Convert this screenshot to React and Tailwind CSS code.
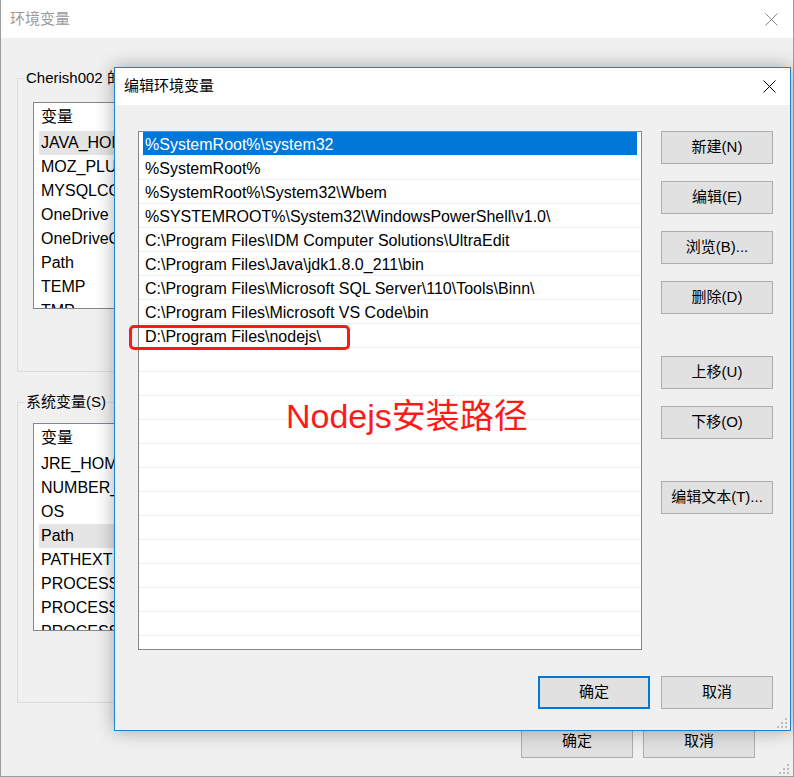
const userVars = ['JAVA_HOME', 'MOZ_PLUGIN_PATH', 'MYSQLCONNECTOR', 'OneDrive', 'OneDriveConsumer', 'Path', 'TEMP', 'TMP'];
const sysVars = ['JRE_HOME', 'NUMBER_OF_PROCESSORS', 'OS', 'Path', 'PATHEXT', 'PROCESSOR_ARCHITECTURE', 'PROCESSOR_IDENTIFIER', 'PROCESSOR_LEVEL'];

const paths = [
  '%SystemRoot%\\system32',
  '%SystemRoot%',
  '%SystemRoot%\\System32\\Wbem',
  '%SYSTEMROOT%\\System32\\WindowsPowerShell\\v1.0\\',
  'C:\\Program Files\\IDM Computer Solutions\\UltraEdit',
  'C:\\Program Files\\Java\\jdk1.8.0_211\\bin',
  'C:\\Program Files\\Microsoft SQL Server\\110\\Tools\\Binn\\',
  'C:\\Program Files\\Microsoft VS Code\\bin',
  'D:\\Program Files\\nodejs\\',
];

function CloseX({ className }) {
  return (
    <svg width="13" height="13" viewBox="0 0 13 13" className={className}>
      <path d="M0.5 0.5L12.5 12.5M12.5 0.5L0.5 12.5" stroke="currentColor" strokeWidth="1" />
    </svg>
  );
}

function Grip({ className }) {
  return (
    <svg width="12" height="12" viewBox="0 0 12 12" className={className}>
      <g fill="#bdbdbd">
        <rect x="9" y="1" width="2" height="2" />
        <rect x="5" y="5" width="2" height="2" />
        <rect x="9" y="5" width="2" height="2" />
        <rect x="1" y="9" width="2" height="2" />
        <rect x="5" y="9" width="2" height="2" />
        <rect x="9" y="9" width="2" height="2" />
      </g>
    </svg>
  );
}

function Button({ children, focused, className = '' }) {
  return (
    <div
      className={`h-[33px] flex items-center justify-center bg-[#e1e1e1] text-[15px] ${
        focused ? 'border-2 border-[#0078d7]' : 'border border-[#adadad]'
      } ${className}`}
    >
      {children}
    </div>
  );
}

function VarList({ items, active, height }) {
  return (
    <div className={`ml-[15px] mr-[15px] bg-white border border-[#828790] overflow-hidden px-[5px] ${height}`}>
      <div className="h-[28px] flex items-center pl-[2px] text-[16px]">变量</div>
      {items.map((name) => (
        <div
          key={name}
          className={`h-[24px] flex items-center pl-[2px] text-[16px] whitespace-nowrap ${
            name === active ? 'bg-[#e5e5e5]' : ''
          }`}
        >
          {name}
        </div>
      ))}
    </div>
  );
}

export default function App() {
  const rows = [...paths, ...Array(13).fill('')];

  return (
    <div className="w-[794px] h-[777px] relative overflow-hidden bg-[#f0f0f0] text-black font-['Liberation_Sans','Noto_Sans_CJK_SC',sans-serif]">
      {/* outer window */}
      <div className="h-full flex flex-col border-l border-r border-b border-[#9d9d9d]">
        <div className="h-[38px] bg-white flex items-center justify-between pl-[9px] pr-[15px] shrink-0">
          <span className="text-[15px] text-[#9a9a9a]">环境变量</span>
          <CloseX className="text-[#8a8a8a]" />
        </div>

        <div className="flex-1 flex flex-col px-[16px]">
          <fieldset className="mt-[29px] h-[305px] border border-[#dcdcdc]">
            <legend className="ml-[6px] px-[2px] text-[15px] leading-[22px]">Cherish002 的用户变量(U)</legend>
            <div className="mt-[13px]">
              <VarList items={userVars} active="JAVA_HOME" height="h-[207px]" />
            </div>
          </fieldset>

          <fieldset className="mt-[19px] h-[312px] border border-[#dcdcdc]">
            <legend className="ml-[6px] px-[2px] text-[15px] leading-[22px]">系统变量(S)</legend>
            <div className="mt-[10px]">
              <VarList items={sysVars} active="Path" height="h-[208px]" />
            </div>
          </fieldset>

          <div className="mt-[22px] flex justify-end gap-[10px] mr-[22px]">
            <Button className="w-[112px]">确定</Button>
            <Button className="w-[112px]">取消</Button>
          </div>
        </div>
      </div>
      <Grip className="absolute right-[4px] bottom-[2px]" />

      {/* edit dialog */}
      <div className="absolute left-[114px] top-[67px] w-[677px] h-[664px] border border-[#1883d7] bg-[#f0f0f0] flex flex-col shadow-[0_0_18px_rgba(0,0,0,0.32)]">
        <div className="h-[37px] bg-white flex items-center justify-between pl-[9px] pr-[14px] shrink-0">
          <span className="text-[15px]">编辑环境变量</span>
          <CloseX className="text-black" />
        </div>

        <div className="flex-1 flex flex-col pt-[26px] pl-[23px] pr-[17px] pb-[21px]">
          <div className="flex gap-[19px]">
            <div className="relative w-[504px] h-[519px] bg-white border border-[#828790]">
              <div className="h-full overflow-hidden">
                {rows.map((p, i) => (
                  <div key={i} className="h-[24px] border-b border-[#f0f0f0]">
                    <div
                      className={`h-full mx-[4px] pl-[2px] pt-[2px] flex items-center text-[16px] whitespace-nowrap ${
                        i === 0 ? 'bg-[#0078d7] text-white h-[24px]' : ''
                      }`}
                    >
                      {p}
                    </div>
                  </div>
                ))}
              </div>

              <div className="absolute left-[-10px] top-[193px] w-[221px] h-[25px] border-[3px] border-[#ff1a1a] rounded-[5px]" />
              <span className="absolute left-[147px] top-[267px] text-[34px] leading-none text-[#ff1a1a] whitespace-nowrap">
                Nodejs安装路径
              </span>
            </div>

            <div className="w-[112px] flex flex-col">
              <Button>新建(N)</Button>
              <Button className="mt-[17px]">编辑(E)</Button>
              <Button className="mt-[17px]">浏览(B)...</Button>
              <Button className="mt-[17px]">删除(D)</Button>
              <Button className="mt-[42px]">上移(U)</Button>
              <Button className="mt-[17px]">下移(O)</Button>
              <Button className="mt-[42px]">编辑文本(T)...</Button>
            </div>
          </div>

          <div className="mt-[26px] flex justify-end gap-[11px]">
            <Button focused className="w-[112px]">确定</Button>
            <Button className="w-[112px]">取消</Button>
          </div>
        </div>
        <Grip className="absolute right-[2px] bottom-[1px]" />
      </div>
    </div>
  );
}
